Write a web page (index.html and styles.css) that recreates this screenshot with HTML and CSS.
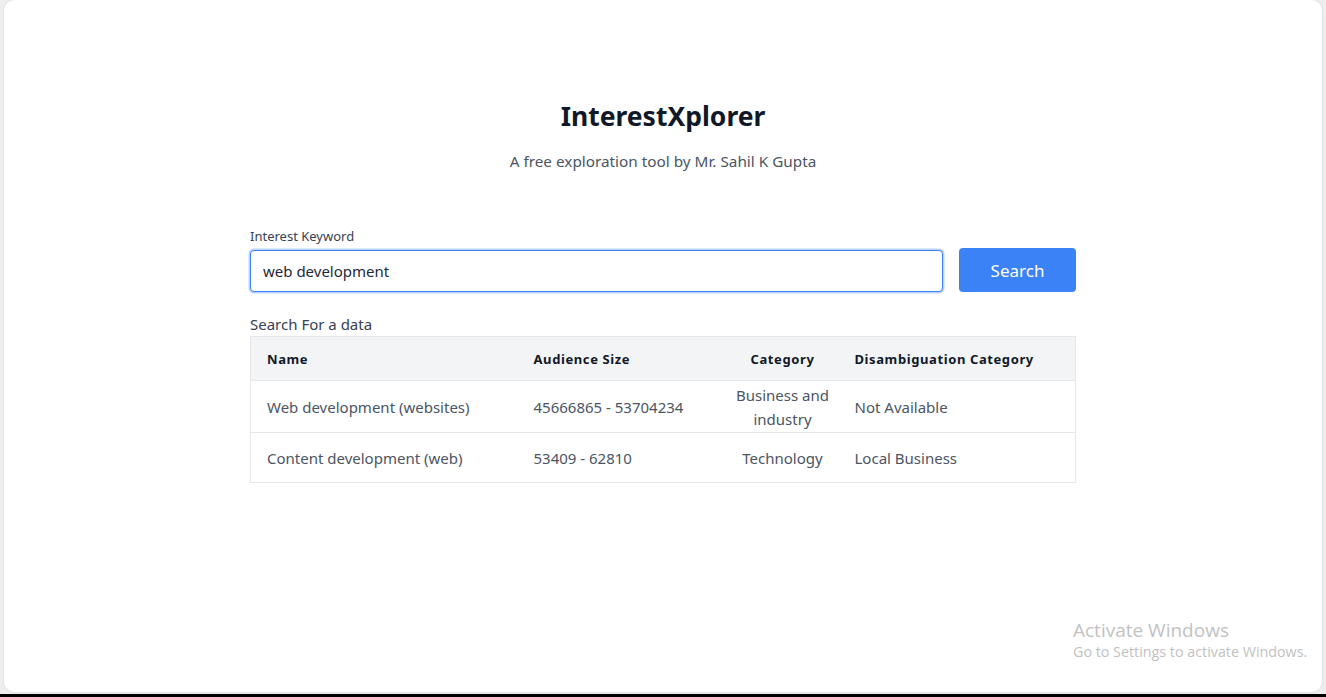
FILE: index.html
```html
<!DOCTYPE html>
<html>
<head>
<meta charset="utf-8">
<link rel="stylesheet" href="styles.css">
</head>
<body>
<div class="screen">
  <div class="card">
    <main class="content">
      <header class="hero">
        <h1 class="title">InterestXplorer</h1>
        <p class="subtitle">A free exploration tool by Mr. Sahil K Gupta</p>
      </header>
      <form class="search">
        <label class="label" for="kw">Interest Keyword</label>
        <div class="search-row">
          <input id="kw" class="input" type="text" value="web development">
          <button type="button" class="btn">Search</button>
        </div>
      </form>
      <p class="caption">Search For a data</p>
      <table class="table">
        <colgroup>
          <col class="c1"><col class="c2"><col class="c3"><col class="c4">
        </colgroup>
        <thead>
          <tr><th>Name</th><th>Audience Size</th><th class="center">Category</th><th>Disambiguation Category</th></tr>
        </thead>
        <tbody>
          <tr class="r1"><td>Web development (websites)</td><td>45666865 - 53704234</td><td class="center">Business and industry</td><td>Not Available</td></tr>
          <tr class="r2"><td>Content development (web)</td><td>53409 - 62810</td><td class="center">Technology</td><td>Local Business</td></tr>
        </tbody>
      </table>
    </main>
    <div class="watermark">
      <div class="wm-title">Activate Windows</div>
      <div class="wm-sub">Go to Settings to activate Windows.</div>
    </div>
  </div>
  <div class="taskbar"></div>
</div>
</body>
</html>
```
FILE: styles.css
```css
* { box-sizing: border-box; }
html, body { margin: 0; padding: 0; }
body {
  width: 1326px;
  height: 697px;
  overflow: hidden;
  background: #eeeeee;
  font-family: "Noto Sans", "Open Sans", sans-serif;
}
.screen {
  height: 697px;
  display: flex;
  flex-direction: column;
}
.card {
  position: relative;
  margin: 0 4px;
  height: 692px;
  background: #ffffff;
  border-radius: 10px;
  box-shadow: 0 0 2px rgba(0,0,0,0.15);
}
.taskbar {
  margin-top: 2px;
  height: 3px;
  background: #000;
}
.content {
  width: 826px;
  margin: 0 auto;
  padding-top: 96px;
}
.hero { text-align: center; }
.title {
  margin: 0;
  font-size: 26.5px;
  line-height: 40px;
  font-weight: 700;
  color: #111827;
}
.subtitle {
  margin: 13px 0 0;
  font-size: 15.3px;
  line-height: 24px;
  color: #4b5563;
}
.search { margin-top: 53px; }
.label {
  display: block;
  font-size: 13px;
  line-height: 20px;
  color: #374151;
}
.search-row {
  margin-top: 2px;
  display: flex;
  align-items: flex-end;
  gap: 16px;
}
.input {
  flex: 1;
  height: 42px;
  border: 1px solid #3b82f6;
  border-radius: 4px;
  box-shadow: 0 0 0 1.5px rgba(59,130,246,0.35);
  padding: 0 12px;
  font: inherit;
  font-size: 15px;
  color: #1f2937;
  outline: none;
}
.btn {
  width: 117px;
  height: 44px;
  border: none;
  border-radius: 4px;
  background: #3b82f6;
  color: #ffffff;
  font: inherit;
  font-size: 17px;
}
.caption {
  margin: 20px 0 0;
  font-size: 15px;
  line-height: 24px;
  color: #374151;
}
.table {
  width: 825px;
  border-collapse: collapse;
  table-layout: fixed;
  border: 1px solid #e5e7eb;
  font-size: 15px;
  color: #4b5563;
}
.c1 { width: 267px; }
.c2 { width: 209px; }
.c3 { width: 112px; }
.c4 { width: 237px; }
thead tr { background: #f3f4f6; }
th {
  height: 44px;
  padding: 0 16px;
  text-align: left;
  font-size: 13px;
  font-weight: 700;
  letter-spacing: 0.6px;
  color: #111827;
}
td {
  padding: 0 16px;
  line-height: 24px;
  border-top: 1px solid #e5e7eb;
  vertical-align: middle;
}
th.center, td.center { text-align: center; padding: 0 8px; }
.r1 td { height: 52px; }
.r2 td { height: 50px; }
.watermark {
  position: absolute;
  left: 1069px;
  top: 618px;
  color: #c2c2c2;
  font-family: "Open Sans", "Noto Sans", sans-serif;
}
.wm-title { font-size: 19px; line-height: 24px; }
.wm-sub { font-size: 14.3px; line-height: 20px; }
```
